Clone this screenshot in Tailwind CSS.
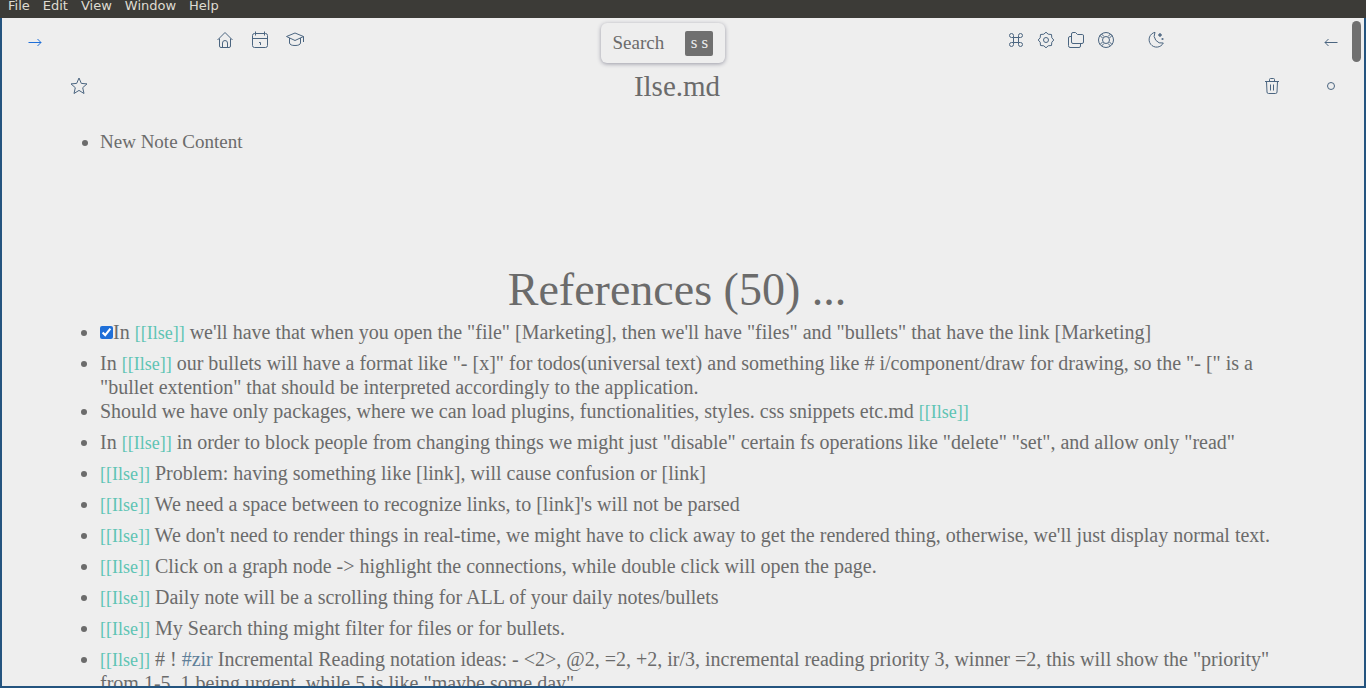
<!DOCTYPE html>
<html lang="en">
<head>
<meta charset="utf-8">
<title>Ilse.md</title>
<script src="https://cdn.jsdelivr.net/npm/@tailwindcss/browser@4"></script>
</head>
<body class="flex h-screen flex-col overflow-hidden bg-[#eeeeee] text-[#6b6b6b]">
<nav class="flex h-[18px] shrink-0 items-start gap-[13px] bg-[#3c3b37] pl-2 font-['DejaVu_Sans'] text-[13px] leading-3 text-[#dfdbd2]">
  <button>File</button><button>Edit</button><button>View</button><button>Window</button><button>Help</button>
</nav>
<div class="flex min-h-0 grow border-x-2 border-b-2 border-[#24547f]">
<main class="min-w-0 grow overflow-hidden font-['Liberation_Serif',serif] text-[19px] leading-6">
  <header class="grid h-12 grid-cols-[599fr_auto_626fr] items-start pt-[5px] text-[#4b6580]">
    <div class="flex items-start pt-2 pl-6">
      <button aria-label="Open left panel" class="mr-[172px] pt-[2px] text-[#1f6fd8]"><svg class="size-[18px]" viewBox="0 0 18 18" fill="none" stroke="currentColor"><path d="M2.500 9.500H15M11.500 6L15 9.500L11.500 13"/></svg></button>
      <div class="flex gap-[17px]">
        <button aria-label="Home"><svg class="size-[18px]" viewBox="0 0 18 18" fill="none" stroke="currentColor"><path d="M1.500 9L9 1.500L16.500 9M3.500 7.500V15Q3.500 16.500 5 16.500H13Q14.500 16.500 14.500 15V7.500M6.500 16.500V12A2.500 2.500 0 0 1 11.500 12V16.500"/></svg></button>
        <button aria-label="Daily note"><svg class="size-[18px]" viewBox="0 0 18 18" fill="none" stroke="currentColor"><rect x="1.500" y="2.500" width="15" height="14" rx="2"/><path d="M1.500 7.500H16.500M4.500 .5V4.500M13.500 .5V4.500M8 11.500H9.500V14"/></svg></button>
        <button aria-label="Learn"><svg class="size-[18px]" viewBox="0 0 18 18" fill="none" stroke="currentColor"><path d="M.5 5.500L9 2L17.500 5.500L9 9.500ZM3.500 7V12Q4 14.500 9 14.500Q14 14.500 14.500 12V7M17.500 5.500V11"/></svg></button>
      </div>
    </div>
    <button class="flex h-10 w-[124px] items-center justify-between rounded-md pr-3 pl-[11px] text-[#6b6b6b] shadow-[0_1px_4px_#9999a5]"><span>Search</span><kbd class="flex h-[25px] w-7 items-center justify-center rounded-xs bg-[#707070] font-['Liberation_Serif',serif] text-[17px] text-[#eeeeee]">s s</kbd></button>
    <div class="flex items-start justify-end pt-2 pr-3">
      <div class="flex gap-3">
        <button aria-label="Commands"><svg class="size-[18px]" viewBox="0 0 18 18" fill="none" stroke="currentColor"><path d="M6.500 6.500H11.500V11.500H6.500ZM6.500 6.500H4.500A2 2 0 1 1 6.500 4.500ZM11.500 6.500V4.500A2 2 0 1 1 13.500 6.500ZM11.500 11.500H13.500A2 2 0 1 1 11.500 13.500ZM6.500 11.500V13.500A2 2 0 1 1 4.500 11.500Z"/></svg></button>
        <button aria-label="Settings"><svg class="size-[18px]" viewBox="0 0 18 18" fill="none" stroke="currentColor" stroke-linejoin="round"><circle cx="9" cy="9" r="2.500"/><path d="M9 1.200L11.200 3.200L14.500 3.500L14.800 6.800L16.800 9L14.800 11.200L14.500 14.500L11.200 14.800L9 16.800L6.800 14.800L3.500 14.500L3.200 11.200L1.200 9L3.200 6.800L3.500 3.500L6.800 3.200Z"/></svg></button>
        <button aria-label="Files"><svg class="size-[18px]" viewBox="0 0 18 18" fill="none" stroke="currentColor"><path d="M4.500 3Q4.500 1.500 6 1.500H8.500L10.500 3.500H15.500Q16.500 3.500 16.500 5V11Q16.500 12.500 15 12.500H6Q4.500 12.500 4.500 11ZM4.500 5.500H3Q1.500 5.500 1.500 7V14.500Q1.500 16.500 3 16.500H12Q13.500 16.500 13.500 15V12.500"/></svg></button>
        <button aria-label="Help"><svg class="size-[18px]" viewBox="0 0 18 18" fill="none" stroke="currentColor"><circle cx="9" cy="9" r="7.500"/><circle cx="9" cy="9" r="3.500"/><path d="M3 4.500L4.500 3L7 5.500M4.500 3M3 4.500L5.500 7M13.500 3L15 4.500L12.500 7M13.500 3L11 5.500M3 13.500L5.500 11M4.500 15L7 12.500M15 13.500L12.500 11M13.500 15L11 12.500"/></svg></button>
      </div>
      <button aria-label="Toggle dark mode" class="mr-[157px] ml-8"><svg class="size-[18px]" viewBox="0 0 18 18" fill="none" stroke="currentColor"><path d="M8 1.300A7.500 7.500 0 1 0 16.300 12A7.500 7.500 0 0 1 8 1.300Z"/><path d="M13 2L13.700 3.300L15 4L13.700 4.700L13 6L12.300 4.700L11 4L12.300 3.300ZM15.500 7L16.500 8L15.500 9L14.500 8Z" fill="currentColor" stroke-width=".5"/></svg></button>
      <button aria-label="Open right panel" class="pt-[2px]"><svg class="size-[18px]" viewBox="0 0 18 18" fill="none" stroke="currentColor"><path d="M15.500 9.500H3M6.500 6L3 9.500L6.500 13"/></svg></button>
    </div>
  </header>
  <div class="grid h-10 grid-cols-[1fr_auto_1fr] items-center pr-3 pl-[68px] text-[#4b6580]">
    <button aria-label="Favourite" class="justify-self-start"><svg class="size-[18px]" viewBox="0 0 18 18" fill="none" stroke="currentColor" stroke-linejoin="round"><path d="M9 1L11.300 6.400L17 6.900L12.700 10.700L14 16.500L9 13.400L4 16.500L5.300 10.700L1 6.900L6.700 6.400Z"/></svg></button>
    <h1 class="-ml-14 text-[29px] leading-9 text-[#6b6b6b]">Ilse.md</h1>
    <div class="flex items-center gap-[41px] justify-self-end">
      <button aria-label="Delete note"><svg class="size-[18px]" viewBox="0 0 18 18" fill="none" stroke="currentColor"><path d="M2 4.500H16M6.500 4.500V2.500Q6.500 1.500 7.500 1.500H10.500Q11.500 1.500 11.500 2.500V4.500M3.500 4.500L4 15Q4 16.500 5.500 16.500H12.500Q14 16.500 14 15L14.500 4.500M7.500 7.500V13.500M10.500 7.500V13.500"/></svg></button>
      <button aria-label="Note status"><svg class="size-[18px]" viewBox="0 0 18 18" fill="none" stroke="currentColor"><circle cx="9" cy="9" r="3.500"/></svg></button>
    </div>
  </div>
  <ul class="mt-6 list-disc pl-[98px]"><li>New Note Content</li></ul>
  <h2 class="mt-[106px] text-center text-[46px] leading-[60px]">References (50) ...</h2>
  <ul class="list-disc space-y-[7px] pl-[98px] text-xl leading-6 whitespace-nowrap">
    <li><label><input type="checkbox" checked aria-label="Done" class="size-[13px] accent-[#1f6fd8]">In <a href="#" class="text-lg leading-5 text-[#5ec4b4]">[[Ilse]]</a> we'll have that when you open the "file" [Marketing], then we'll have "files" and "bullets" that have the link [Marketing]</label></li>
    <li class="mb-0">In <a href="#" class="text-lg leading-5 text-[#5ec4b4]">[[Ilse]]</a> our bullets will have a format like "- [x]" for todos(universal text) and something like # i/component/draw for drawing, so the "- [" is a<br>"bullet extention" that should be interpreted accordingly to the application.</li>
    <li>Should we have only packages, where we can load plugins, functionalities, styles. css snippets etc.md <a href="#" class="text-lg leading-5 text-[#5ec4b4]">[[Ilse]]</a></li>
    <li>In <a href="#" class="text-lg leading-5 text-[#5ec4b4]">[[Ilse]]</a> in order to block people from changing things we might just "disable" certain fs operations like "delete" "set", and allow only "read"</li>
    <li><a href="#" class="text-lg leading-5 text-[#5ec4b4]">[[Ilse]]</a> Problem: having something like [link], will cause confusion or [link]</li>
    <li><a href="#" class="text-lg leading-5 text-[#5ec4b4]">[[Ilse]]</a> We need a space between to recognize links, to [link]'s will not be parsed</li>
    <li><a href="#" class="text-lg leading-5 text-[#5ec4b4]">[[Ilse]]</a> We don't need to render things in real-time, we might have to click away to get the rendered thing, otherwise, we'll just display normal text.</li>
    <li><a href="#" class="text-lg leading-5 text-[#5ec4b4]">[[Ilse]]</a> Click on a graph node -&gt; highlight the connections, while double click will open the page.</li>
    <li><a href="#" class="text-lg leading-5 text-[#5ec4b4]">[[Ilse]]</a> Daily note will be a scrolling thing for ALL of your daily notes/bullets</li>
    <li><a href="#" class="text-lg leading-5 text-[#5ec4b4]">[[Ilse]]</a> My Search thing might filter for files or for bullets.</li>
    <li><a href="#" class="text-lg leading-5 text-[#5ec4b4]">[[Ilse]]</a> # ! <a href="#" class="text-[#5f7f99]">#zir</a> Incremental Reading notation ideas: - &lt;2&gt;, @2, =2, +2, ir/3, incremental reading priority 3, winner =2, this will show the "priority"<br>from 1-5, 1 being urgent, while 5 is like "maybe some day"</li>
  </ul>
</main>
<div class="w-3 shrink-0 pt-[3px]"><div class="h-[41px] w-[9px] rounded-full bg-[#707070]"></div></div>
</div>
</body>
</html>
